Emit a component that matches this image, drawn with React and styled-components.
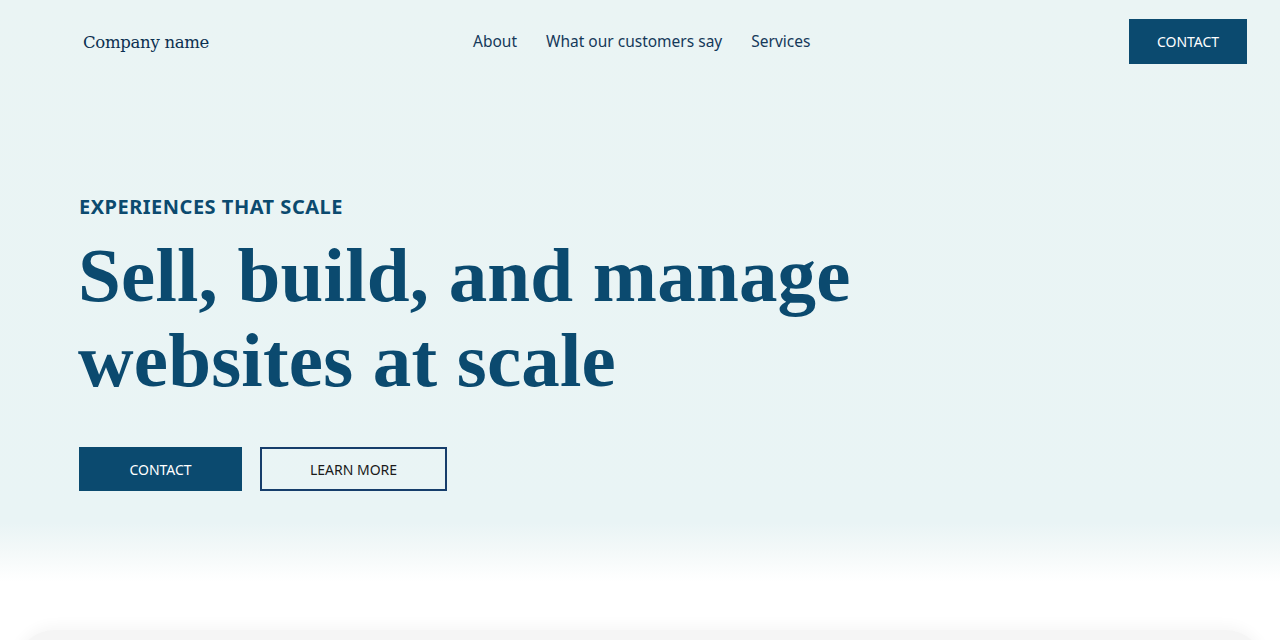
import React from 'react'
import styled, { createGlobalStyle } from 'styled-components'

const GlobalStyle = createGlobalStyle`
  html, body {
    margin: 0;
    padding: 0;
    background: #ffffff;
    font-family: 'Noto Sans', 'Open Sans', sans-serif;
  }
  * {
    box-sizing: border-box;
  }
`

const Page = styled.div`
  width: 1280px;
  height: 640px;
  overflow: hidden;
`

const Hero = styled.div`
  background: linear-gradient(
    180deg,
    #eaf4f4 0%,
    #e9f4f5 87%,
    #f4f9f9 92%,
    #ffffff 97%
  );
  height: 600px;
`

const Header = styled.header`
  display: flex;
  align-items: center;
  justify-content: space-between;
  padding: 19px 33px 0 83px;
  height: 64px;
`

const Logo = styled.a`
  font-family: 'DejaVu Serif', 'Liberation Serif', serif;
  font-size: 16.5px;
  font-weight: 500;
  color: #0c3050;
  text-decoration: none;
  width: 331px;
  letter-spacing: -0.3px;
  padding-top: 2px;
`

const Nav = styled.nav`
  display: flex;
  gap: 29px;
  margin-right: auto;
  margin-left: 59px;
  padding-bottom: 2px;
`

const NavLink = styled.a`
  font-size: 15.5px;
  color: #15395a;
  text-decoration: none;
`

const Button = styled.a`
  display: inline-flex;
  align-items: center;
  justify-content: center;
  width: ${p => p.$w}px;
  height: ${p => p.$h || 44}px;
  font-size: 14px;
  text-decoration: none;
  text-transform: uppercase;
  background: ${p => (p.$outline ? 'transparent' : '#0b4a6f')};
  color: ${p => (p.$outline ? '#1a1a1a' : '#ffffff')};
  border: 2px solid ${p => (p.$outline ? '#163d6b' : '#0b4a6f')};
`

const Content = styled.section`
  padding: 129px 0 0 79px;
`

const Eyebrow = styled.p`
  margin: 0;
  font-size: 20px;
  font-weight: 700;
  color: #0b4a6f;
  letter-spacing: 0.5px;
`

const Title = styled.h1`
  margin: 13px 0 0 -1px;
  font-family: 'Liberation Serif', 'DejaVu Serif', serif;
  font-weight: 700;
  font-size: 77px;
  line-height: 85px;
  color: #0b4a6f;
  letter-spacing: 0.2px;
`

const Actions = styled.div`
  display: flex;
  gap: 18px;
  margin-top: 44px;
`

const Card = styled.div`
  margin: 30px 15px 0;
  height: 200px;
  background: #f5f5f5;
  border-radius: 40px 40px 0 0;
  box-shadow: 0 -4px 14px rgba(0, 0, 0, 0.04);
`

export default function App() {
  return (
    <Page>
      <GlobalStyle />
      <Hero>
        <Header>
          <Logo href="#">Company name</Logo>
          <Nav>
            <NavLink href="#">About</NavLink>
            <NavLink href="#">What our customers say</NavLink>
            <NavLink href="#">Services</NavLink>
          </Nav>
          <Button href="#" $w={118} $h={45}>Contact</Button>
        </Header>
        <Content>
          <Eyebrow>EXPERIENCES THAT SCALE</Eyebrow>
          <Title>
            Sell, build, and manage
            <br />
            websites at scale
          </Title>
          <Actions>
            <Button href="#" $w={163}>Contact</Button>
            <Button href="#" $w={187} $outline>Learn more</Button>
          </Actions>
        </Content>
      </Hero>
      <Card />
    </Page>
  )
}
